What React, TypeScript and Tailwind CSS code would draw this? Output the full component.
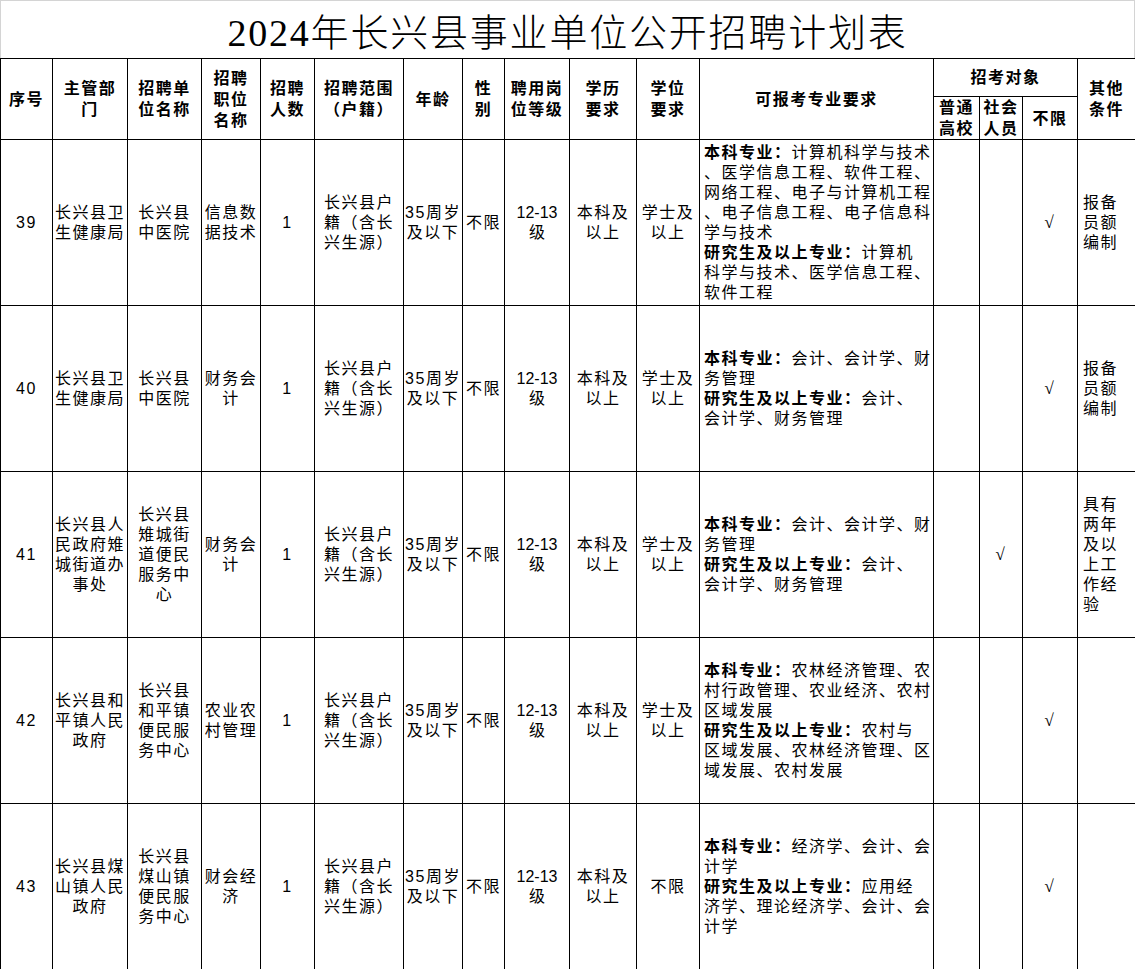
import React from 'react';

// 2024年长兴县事业单位公开招聘计划表 - static recruitment table

type Row = {
  no: string;
  dept: string[];
  unit: string[];
  pos: string[];
  degree: string[];
  major: string[];
  target: 0 | 1 | 2;
  other: string[];
};

const RANGE = ['长兴县户', '籍（含长', '兴生源）'];
const AGE = ['35周岁', '及以下'];
const LEVEL = ['12-13', '级'];
const EDU = ['本科及', '以上'];

const ROWS: Row[] = [
  {
    no: '39',
    dept: ['长兴县卫', '生健康局'],
    unit: ['长兴县', '中医院'],
    pos: ['信息数', '据技术'],
    degree: ['学士及', '以上'],
    major: [
      '本科专业：计算机科学与技术',
      '、医学信息工程、软件工程、',
      '网络工程、电子与计算机工程',
      '、电子信息工程、电子信息科',
      '学与技术',
      '研究生及以上专业：计算机',
      '科学与技术、医学信息工程、',
      '软件工程',
    ],
    target: 2,
    other: ['报备', '员额', '编制'],
  },
  {
    no: '40',
    dept: ['长兴县卫', '生健康局'],
    unit: ['长兴县', '中医院'],
    pos: ['财务会', '计'],
    degree: ['学士及', '以上'],
    major: ['本科专业：会计、会计学、财', '务管理', '研究生及以上专业：会计、', '会计学、财务管理'],
    target: 2,
    other: ['报备', '员额', '编制'],
  },
  {
    no: '41',
    dept: ['长兴县人', '民政府雉', '城街道办', '事处'],
    unit: ['长兴县', '雉城街', '道便民', '服务中', '心'],
    pos: ['财务会', '计'],
    degree: ['学士及', '以上'],
    major: ['本科专业：会计、会计学、财', '务管理', '研究生及以上专业：会计、', '会计学、财务管理'],
    target: 1,
    other: ['具有', '两年', '及以', '上工', '作经', '验'],
  },
  {
    no: '42',
    dept: ['长兴县和', '平镇人民', '政府'],
    unit: ['长兴县', '和平镇', '便民服', '务中心'],
    pos: ['农业农', '村管理'],
    degree: ['学士及', '以上'],
    major: [
      '本科专业：农林经济管理、农',
      '村行政管理、农业经济、农村',
      '区域发展',
      '研究生及以上专业：农村与',
      '区域发展、农林经济管理、区',
      '域发展、农村发展',
    ],
    target: 2,
    other: [],
  },
  {
    no: '43',
    dept: ['长兴县煤', '山镇人民', '政府'],
    unit: ['长兴县', '煤山镇', '便民服', '务中心'],
    pos: ['财会经', '济'],
    degree: ['不限'],
    major: ['本科专业：经济学、会计、会', '计学', '研究生及以上专业：应用经', '济学、理论经济学、会计、会', '计学'],
    target: 2,
    other: [],
  },
];

const PREFIXES = ['本科专业：', '研究生及以上专业：'];

function Lines({ lines }: { lines: string[] }) {
  return (
    <>
      {lines.map((l, i) => (
        <div key={i} className="whitespace-nowrap">
          {l}
        </div>
      ))}
    </>
  );
}

function MajorLine({ text }: { text: string }) {
  const p = PREFIXES.find((x) => text.startsWith(x));
  if (!p) return <div className="whitespace-nowrap">{text}</div>;
  return (
    <div className="whitespace-nowrap">
      <span className="font-bold">{p}</span>
      {text.slice(p.length)}
    </div>
  );
}

const td = 'border border-black align-middle text-center p-0';
const th = 'border border-black align-middle text-center p-0 font-bold leading-[21px]';

function Check() {
  return <span className="font-['Liberation_Serif',serif] text-[17px] italic leading-none">√</span>;
}

export default function App() {
  return (
    <div className="w-[1135px] bg-white text-black font-['Liberation_Sans','Noto_Sans_CJK_SC',sans-serif]">
      <div className="flex h-[58px] items-center justify-center border-x border-t border-[#d4d4d4] pt-[7px]">
        <h1 className="font-['Liberation_Serif','Noto_Sans_CJK_SC',serif] text-[38px] font-light leading-none tracking-[1.8px]">
          2024年长兴县事业单位公开招聘计划表
        </h1>
      </div>
      <table className="w-[1135px] table-fixed border-collapse text-[16px] leading-[20px] tracking-[1.5px]">
        <colgroup>
          <col className="w-[52px]" />
          <col className="w-[75px]" />
          <col className="w-[74px]" />
          <col className="w-[59px]" />
          <col className="w-[54px]" />
          <col className="w-[89px]" />
          <col className="w-[59px]" />
          <col className="w-[42px]" />
          <col className="w-[65px]" />
          <col className="w-[67px]" />
          <col className="w-[63px]" />
          <col className="w-[234px]" />
          <col className="w-[46px]" />
          <col className="w-[43px]" />
          <col className="w-[55px]" />
          <col className="w-[58px]" />
        </colgroup>
        <thead>
          <tr className="h-[38px]">
            <th rowSpan={2} className={th}>序号</th>
            <th rowSpan={2} className={th}><Lines lines={['主管部', '门']} /></th>
            <th rowSpan={2} className={th}><Lines lines={['招聘单', '位名称']} /></th>
            <th rowSpan={2} className={th}><Lines lines={['招聘', '职位', '名称']} /></th>
            <th rowSpan={2} className={th}><Lines lines={['招聘', '人数']} /></th>
            <th rowSpan={2} className={th}><Lines lines={['招聘范围', '（户籍）']} /></th>
            <th rowSpan={2} className={th}>年龄</th>
            <th rowSpan={2} className={th}><Lines lines={['性', '别']} /></th>
            <th rowSpan={2} className={th}><Lines lines={['聘用岗', '位等级']} /></th>
            <th rowSpan={2} className={th}><Lines lines={['学历', '要求']} /></th>
            <th rowSpan={2} className={th}><Lines lines={['学位', '要求']} /></th>
            <th rowSpan={2} className={th}>可报考专业要求</th>
            <th colSpan={3} className={th}>招考对象</th>
            <th rowSpan={2} className={th}><Lines lines={['其他', '条件']} /></th>
          </tr>
          <tr className="h-[38px]">
            <th className={th + ' leading-[19px]'}><Lines lines={['普通', '高校']} /></th>
            <th className={th + ' leading-[19px]'}><Lines lines={['社会', '人员']} /></th>
            <th className={th}>不限</th>
          </tr>
        </thead>
        <tbody>
          {ROWS.map((r) => (
            <tr key={r.no} className="h-[166px]">
              <td className={td}>{r.no}</td>
              <td className={td}><Lines lines={r.dept} /></td>
              <td className={td}><Lines lines={r.unit} /></td>
              <td className={td}><Lines lines={r.pos} /></td>
              <td className={td}>1</td>
              <td className={td}><Lines lines={RANGE} /></td>
              <td className={td}><Lines lines={AGE} /></td>
              <td className={td}>不限</td>
              <td className={td + ' tracking-normal'}><Lines lines={LEVEL} /></td>
              <td className={td}><Lines lines={EDU} /></td>
              <td className={td}><Lines lines={r.degree} /></td>
              <td className={td + ' !text-left pl-[4px]'}>
                {r.major.map((m, i) => (
                  <MajorLine key={i} text={m} />
                ))}
              </td>
              <td className={td}>{r.target === 0 && <Check />}</td>
              <td className={td}>{r.target === 1 && <Check />}</td>
              <td className={td}>{r.target === 2 && <Check />}</td>
              <td className={td + ' !text-left pl-[5px]'}><Lines lines={r.other} /></td>
            </tr>
          ))}
        </tbody>
      </table>
    </div>
  );
}
